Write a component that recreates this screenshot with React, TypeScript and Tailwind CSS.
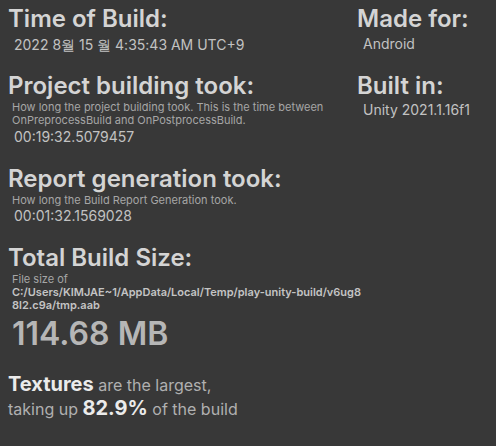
export default function App() {
  const heading = "text-[24px] leading-[28px] font-semibold text-[#d4d4d4] pl-[8px]";
  const value = "text-[14px] leading-[17px] text-[#c2c2c2] pl-[14px]";
  const desc = "text-[11px] leading-[13px] text-[#a6a6a6] pl-[12px]";

  return (
    <div className="w-[496px] h-[446px] bg-[#383838] overflow-hidden font-['Inter',sans-serif] pt-[5px]">
      <div className="flex">
        <div className="w-[349px] shrink-0">
          <div className={heading}>Time of Build:</div>
          <div className={`${value} mt-[3px]`}>2022 8월 15 월 4:35:43 AM UTC+9</div>

          <div className={`${heading} mt-[19px] whitespace-nowrap`}>Project building took:</div>
          <div className={`${desc} mt-[1px] whitespace-nowrap`}>
            How long the project building took. This is the time between
            <br />
            OnPreprocessBuild and OnPostprocessBuild.
          </div>
          <div className={`${value} mt-[1px]`}>00:19:32.5079457</div>
        </div>

        <div className="flex-1">
          <div className={heading}>Made for:</div>
          <div className={`${value} mt-[2px]`}>Android</div>

          <div className={`${heading} mt-[20px]`}>Built in:</div>
          <div className={`${value} mt-[1px]`}>Unity 2021.1.16f1</div>
        </div>
      </div>

      <div>
        <div className={`${heading} mt-[20px]`}>Report generation took:</div>
        <div className={`${desc} mt-[1px]`}>How long the Build Report Generation took.</div>
        <div className={value}>00:01:32.1569028</div>

        <div className={`${heading} mt-[20px]`}>Total Build Size:</div>
        <div className={`${desc} mt-[1px]`}>File size of</div>
        <div className="text-[11px] leading-[13px] font-semibold text-[#c4c4c4] pl-[12px] whitespace-nowrap">
          C:/Users/KIMJAE~1/AppData/Local/Temp/play-unity-build/v6ug8
          <br />
          8l2.c9a/tmp.aab
        </div>
        <div className="text-[32px] leading-[36px] font-semibold text-[#b6b6b6] pl-[12px] mt-[4px]">114.68 MB</div>

        <div className="text-[16px] leading-[24px] text-[#b0b0b0] pl-[8px] mt-[21px]">
          <span className="text-[20px] leading-none font-bold text-[#ebebeb]">Textures</span> are the largest,
          <br />
          taking up <span className="text-[20px] leading-none font-bold text-[#ebebeb]">82.9%</span> of the build
        </div>
      </div>
    </div>
  );
}
